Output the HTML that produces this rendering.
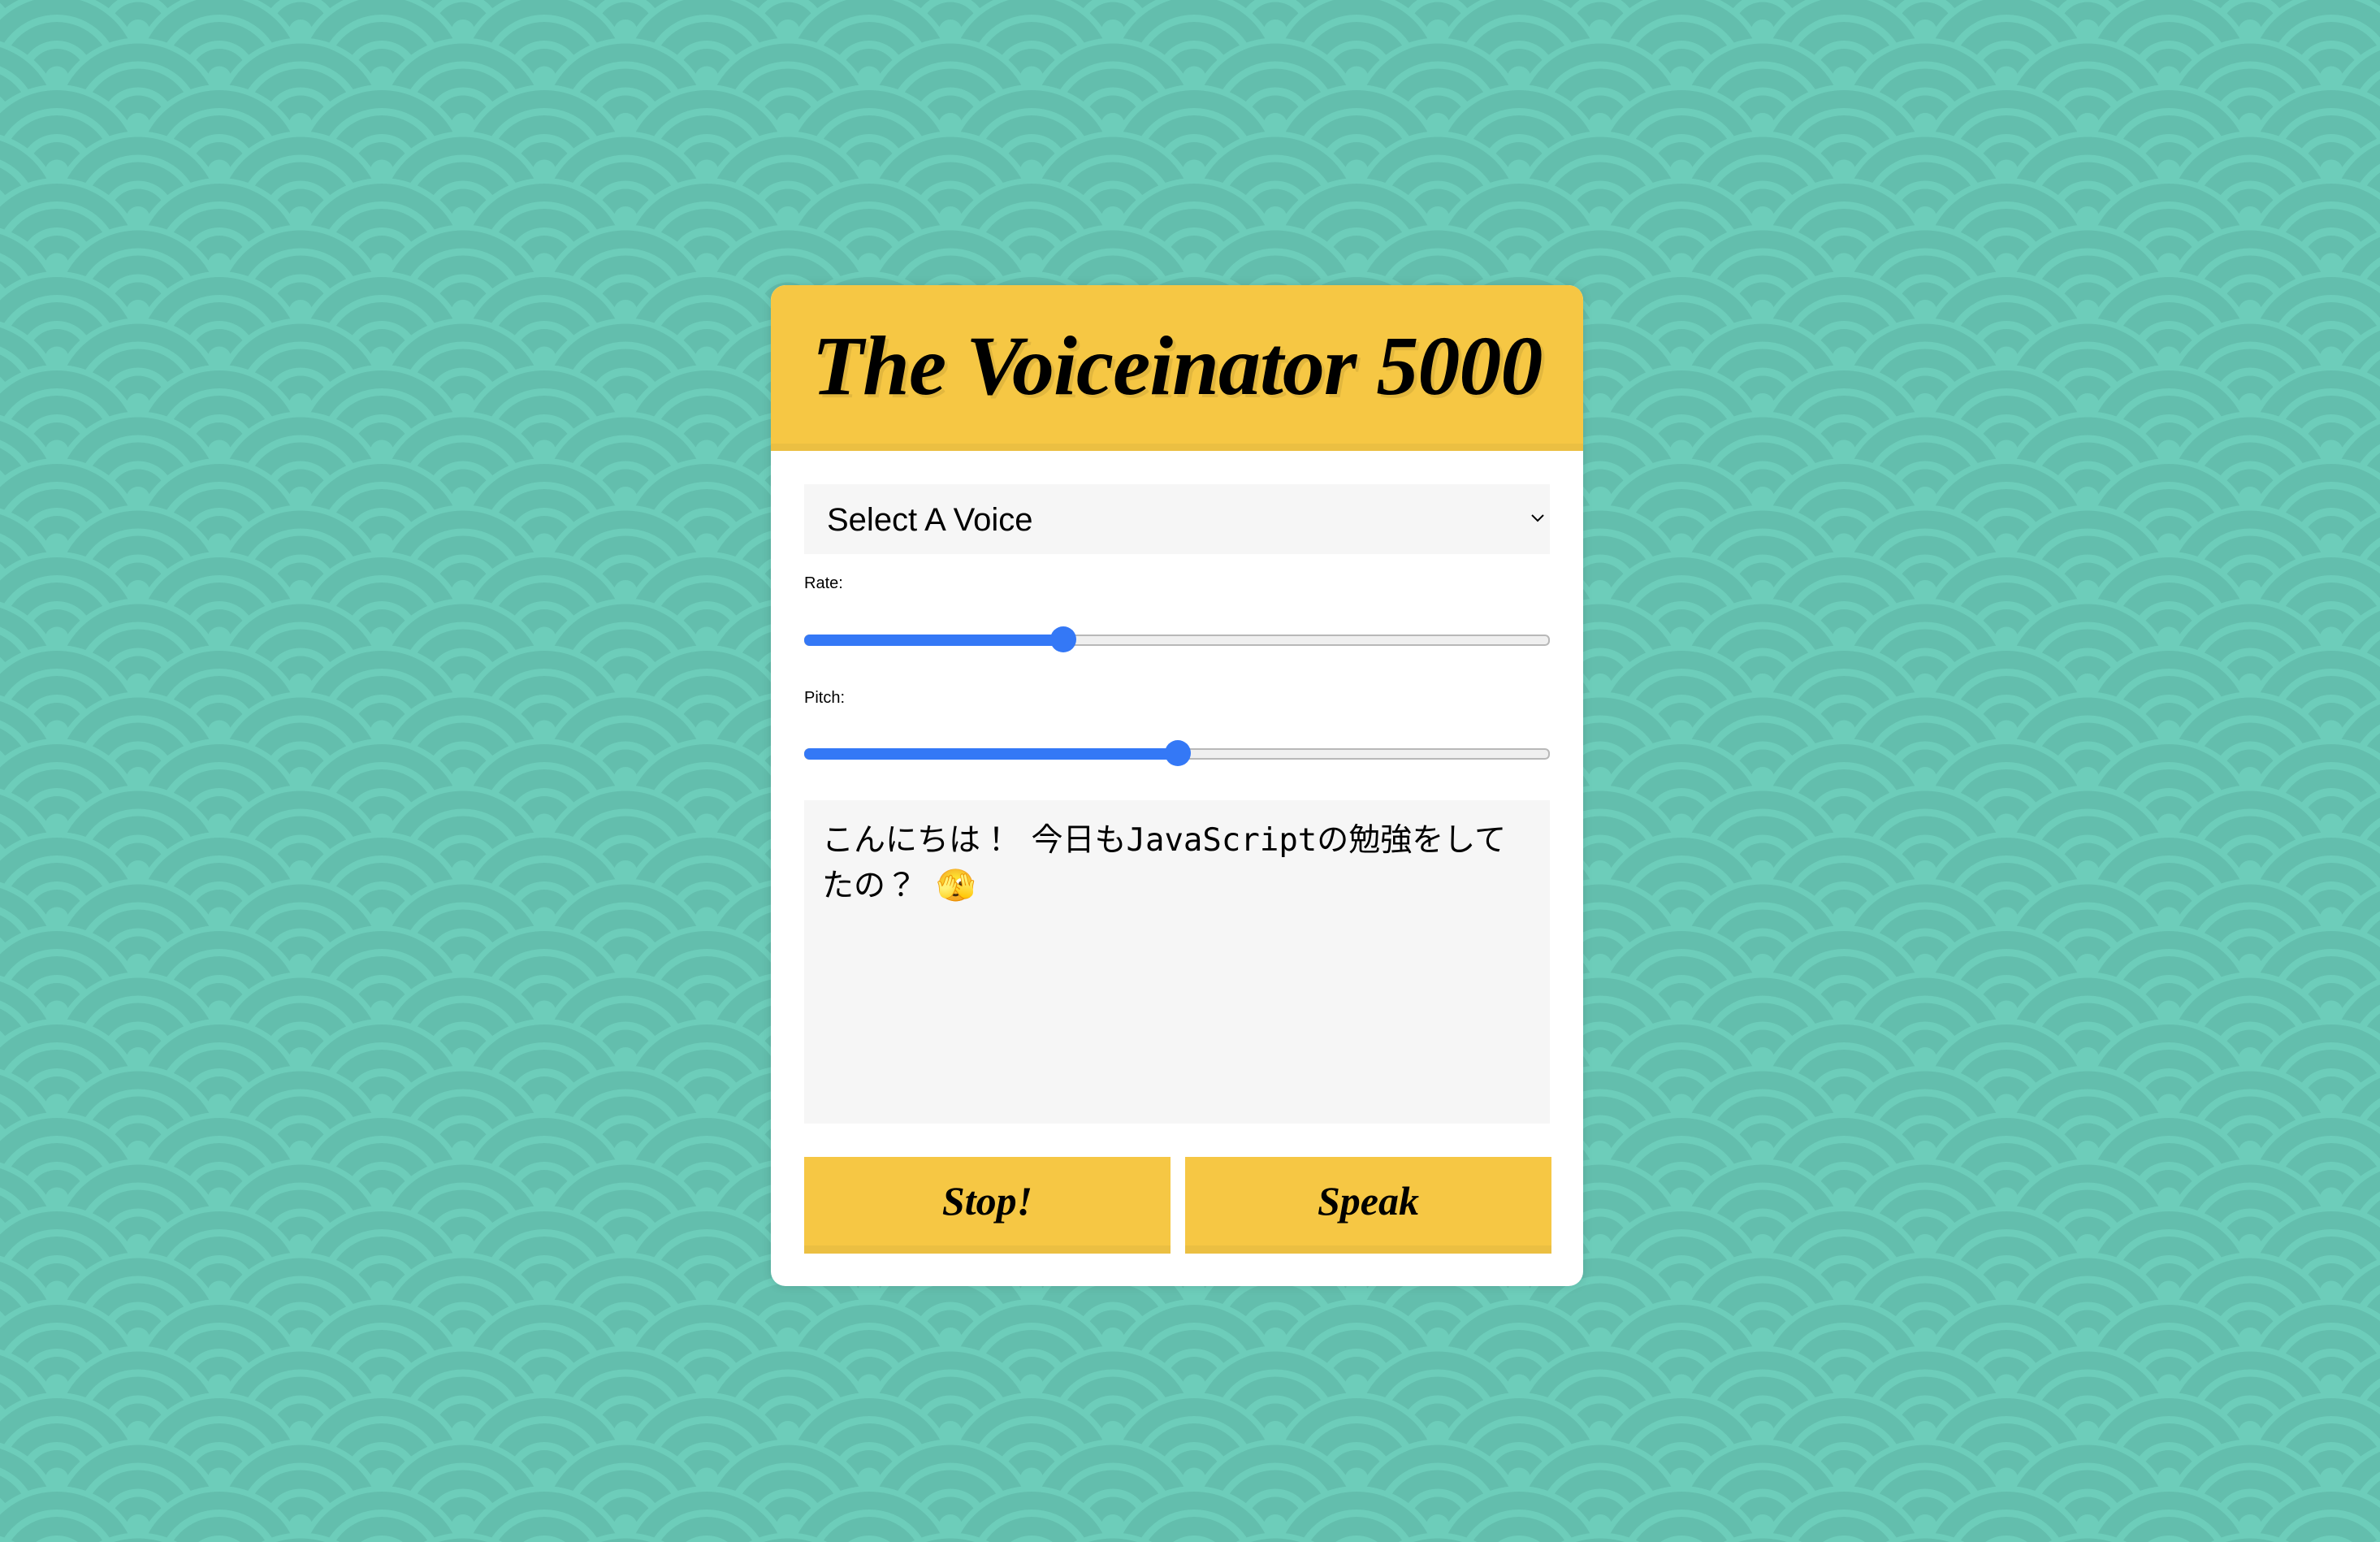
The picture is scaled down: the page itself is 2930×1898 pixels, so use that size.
<!DOCTYPE html>
<html><head><meta charset="utf-8"><style>
html,body{margin:0;padding:0;width:2930px;height:1898px;overflow:hidden;background:#6dcdba;}
#bg{position:absolute;left:0;top:0}
.card{position:absolute;left:949px;top:351px;width:1000px;height:1232px;background:#fff;border-radius:18px;overflow:hidden;box-shadow:0 0 12px rgba(0,0,0,.12)}
.head{height:195px;background:#f6c744;border-bottom:9px solid #ebbf42;text-align:center;}
.head h1{margin:0;padding-top:30px;font-family:"Liberation Serif",serif;font-style:italic;font-weight:bold;font-size:104px;line-height:140px;color:#000;text-shadow:4px 4px 0 rgba(0,0,0,.08);letter-spacing:-1px;white-space:nowrap}
.sel{position:absolute;left:41px;top:245px;width:918px;height:86px;background:#f6f6f6;font-family:"Liberation Sans",sans-serif;font-size:40px;line-height:88px;text-indent:28px;color:#000}
.sel svg{position:absolute;right:6px;top:36px}
.lbl{position:absolute;left:41px;font-family:"Liberation Sans",sans-serif;font-size:20px;color:#000}
.track{position:absolute;left:41px;width:914px;height:10px;border-radius:6px;background:#efefef;border:2px solid #b8b8b8}
.fill{position:absolute;left:41px;height:14px;border-radius:7px;background:#3478f6}
.thumb{position:absolute;width:32px;height:32px;border-radius:50%;background:#3478f6}
.ta{position:absolute;left:41px;top:634px;width:918px;height:398px;background:#f6f6f6;font-family:"DejaVu Sans Mono","Noto Sans CJK JP",monospace;font-size:39px;line-height:56px;padding:22px 22px;box-sizing:border-box;color:#000}
.btn{position:absolute;top:1073px;width:451px;height:109px;background:#f6c744;border-bottom:10px solid #ebbf42;text-align:center;font-family:"Liberation Serif",serif;font-style:italic;font-weight:bold;font-size:50px;line-height:109px;color:#000}
</style></head><body>
<svg id="bg" width="2930" height="1898">
<defs>
<g id="sc">
<circle r="107" fill="#6dcdba"/><circle r="100" fill="#63bead"/><circle r="78" fill="#6dcdba"/><circle r="69" fill="#63bead"/><circle r="46" fill="#6dcdba"/><circle r="36" fill="#63bead"/><circle r="14.5" fill="#6dcdba"/>
</g>
<pattern id="p" width="200" height="115" patternUnits="userSpaceOnUse" x="70" y="-19">
<use href="#sc" x="100" y="-57.5"/>
<use href="#sc" x="0" y="0"/><use href="#sc" x="200" y="0"/>
<use href="#sc" x="100" y="57.5"/>
<use href="#sc" x="0" y="115"/><use href="#sc" x="200" y="115"/>
<use href="#sc" x="100" y="172.5"/>
</pattern>
</defs>
<rect width="2930" height="1898" fill="url(#p)"/>
</svg>
<div class="card">
<div class="head"><h1>The Voiceinator 5000</h1></div>
<div class="sel">Select A Voice<svg width="18" height="12" viewBox="0 0 18 12"><path d="M2 2 L9 9 L16 2" fill="none" stroke="#000" stroke-width="2"/></svg></div>
<div class="lbl" style="top:356px">Rate:</div>
<div class="track" style="top:430px"></div>
<div class="fill" style="top:430px;width:330px"></div>
<div class="thumb" style="left:344px;top:420px"></div>
<div class="lbl" style="top:497px">Pitch:</div>
<div class="track" style="top:570px"></div>
<div class="fill" style="top:570px;width:470px"></div>
<div class="thumb" style="left:485px;top:560px"></div>
<div class="ta">こんにちは！ 今日もJavaScriptの勉強をしてたの？ 🫣</div>
<div class="btn" style="left:41px">Stop!</div>
<div class="btn" style="left:510px">Speak</div>
</div>
</body></html>
